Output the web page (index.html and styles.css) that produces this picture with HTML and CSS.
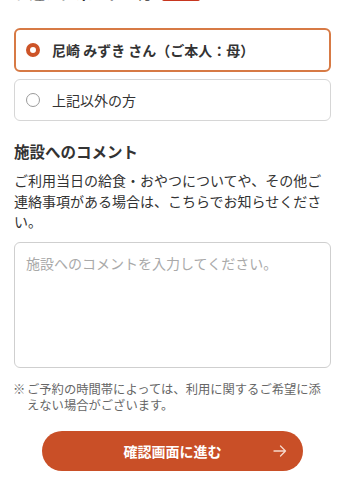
FILE: index.html
```html
<!DOCTYPE html>
<html lang="ja">
<head>
<meta charset="utf-8">
<link rel="stylesheet" href="styles.css">
</head>
<body>
<main class="page">
  <h2 class="section-title prev">お迎えに来られる方<span class="badge">必須</span></h2>

  <div class="options">
    <label class="option selected">
      <span class="radio"></span>
      <span class="option-text bold">尼崎 みずき さん（ご本人：母）</span>
    </label>
    <label class="option">
      <span class="radio"></span>
      <span class="option-text">上記以外の方</span>
    </label>
  </div>

  <h2 class="section-title comment-title">施設へのコメント</h2>
  <p class="desc">ご利用当日の給食・おやつについてや、その他ご連絡事項がある場合は、こちらでお知らせください。</p>

  <div class="textarea"><span class="placeholder">施設へのコメントを入力してください。</span></div>

  <p class="note"><span class="mark">※</span><span>ご予約の時間帯によっては、利用に関するご希望に添えない場合がございます。</span></p>

  <div class="actions">
    <button class="next-btn">
      <span class="btn-label">確認画面に進む</span>
      <svg class="arrow" width="14" height="12" viewBox="0 0 14 12"><path d="M1 6 H12.5 M7.5 1 L12.5 6 L7.5 11" fill="none" stroke="#f6d9cc" stroke-width="1.3" stroke-linecap="round" stroke-linejoin="round"/></svg>
    </button>
  </div>
</main>
</body>
</html>
```

FILE: styles.css
```css
* { box-sizing: border-box; }
html, body { margin: 0; padding: 0; background: #fff; }
body {
  font-family: "Noto Sans CJK JP", "Noto Sans", sans-serif;
  color: #333;
  overflow: hidden;
  height: 490px;
}
.page { padding: 0 14px; }

.section-title {
  margin: 0;
  font-size: 15.5px;
  font-weight: 700;
  line-height: 22px;
  color: #333;
  display: flex;
  align-items: center;
}
.prev { margin-top: -19px; }
.badge {
  margin-left: 8px;
  background: #c7361f;
  color: #fff;
  font-size: 11px;
  line-height: 18px;
  padding: 0 8px;
  border-radius: 2px;
  font-weight: 700;
}

.options {
  margin-top: 25px;
  display: flex;
  flex-direction: column;
  gap: 7px;
}
.option {
  display: flex;
  align-items: center;
  height: 42px;
  border: 1px solid #d6d6d6;
  border-radius: 6px;
  padding-left: 11px;
  font-size: 14px;
}
.option.selected {
  height: 44px;
  border: 2px solid #d77a45;
  padding-left: 10px;
}
.radio {
  width: 14px;
  height: 14px;
  border-radius: 50%;
  border: 1px solid #9a9a9a;
  background: #fff;
  flex: none;
}
.selected .radio {
  border: 4px solid #cd5428;
}
.option-text { margin-left: 12px; color: #333; }
.bold { font-weight: 700; }

.comment-title { margin-top: 18.5px; }
.desc {
  margin: 8.75px 0 0;
  font-size: 14px;
  line-height: 20.5px;
  color: #333;
}

.textarea {
  margin-top: 10px;
  height: 126px;
  border: 1px solid #cfcfcf;
  border-radius: 6px;
  padding: 10px 11px;
  font-size: 14px;
  line-height: 21px;
}
.placeholder { color: #a9a9a9; }

.note {
  margin: 14.5px 0 0;
  display: flex;
  font-size: 12.3px;
  line-height: 15.5px;
  color: #666;
}
.mark { width: 14px; flex: none; margin-left: -1px; }

.actions {
  margin-top: 18px;
  display: flex;
  justify-content: center;
}
.next-btn {
  position: relative;
  width: 261px;
  height: 40px;
  border: none;
  border-radius: 20px;
  background: #c94f27;
  color: #fff;
  font-family: inherit;
  font-size: 14px;
  font-weight: 700;
  display: flex;
  align-items: center;
  justify-content: center;
  padding: 0;
}
.arrow { position: absolute; right: 16px; top: 14px; }
```
